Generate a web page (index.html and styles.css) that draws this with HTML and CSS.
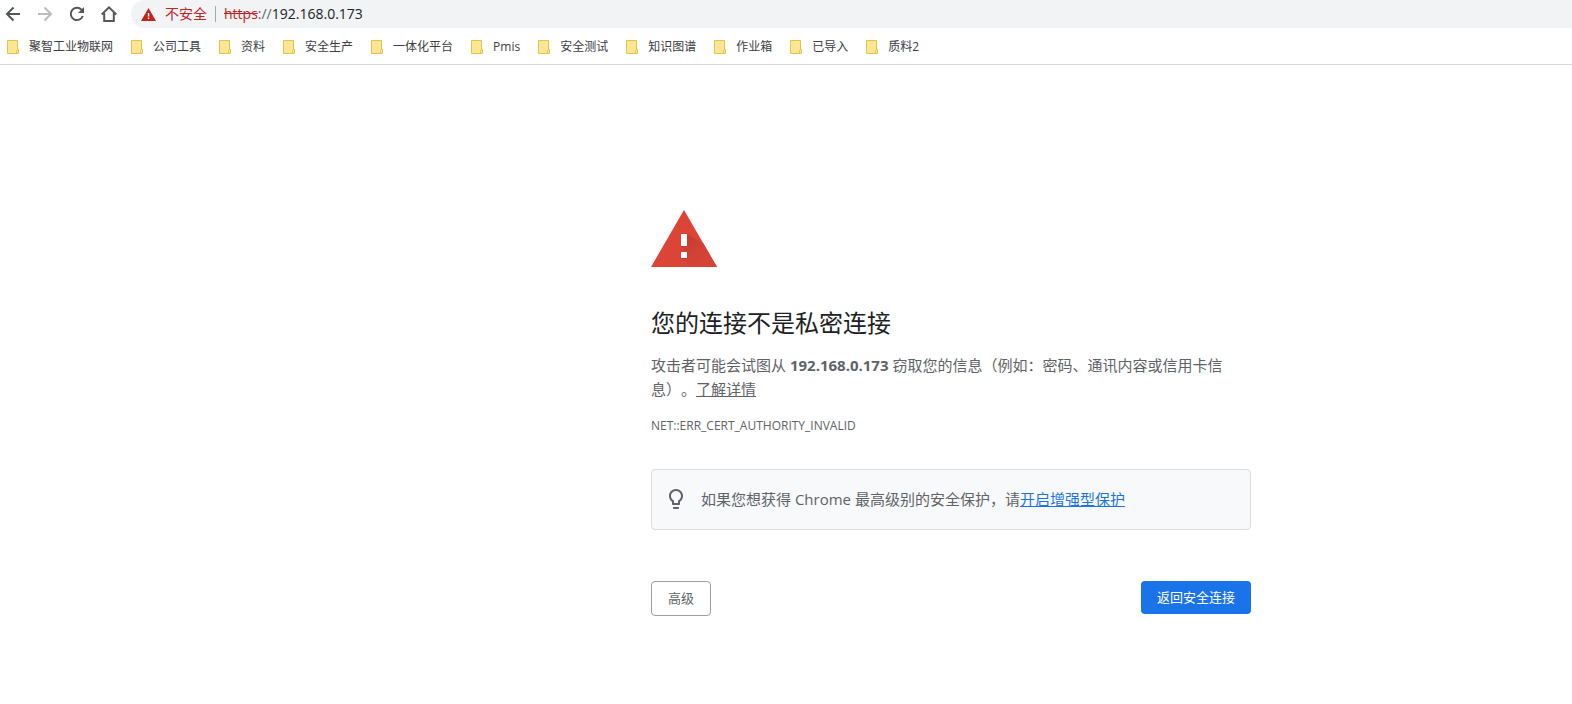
FILE: index.html
```html
<!DOCTYPE html>
<html lang="zh-CN">
<head>
<meta charset="utf-8">
<title>隐私设置错误</title>
<link rel="stylesheet" href="styles.css">
</head>
<body>
<svg class="sprite" aria-hidden="true">
  <symbol id="folder" viewBox="0 0 12 14"><path d="M.5.5h10v9h1v4H.5z"/><path d="M9.500 13.500v-3l1-1h1v3l-1 1z"/></symbol>
</svg>
<header class="browser">
  <div class="toolbar">
    <nav class="nav">
      <button class="nav-button" type="button" aria-label="后退"><svg viewBox="0 0 16 16"><path d="M15 8H2M8.500 1.500L2 8l6.500 6.500"/></svg></button>
      <button class="nav-button nav-button-off" type="button" aria-label="前进"><svg viewBox="0 0 16 16"><path d="M1 8h13M7.500 1.500L14 8l-6.500 6.500"/></svg></button>
      <button class="nav-button" type="button" aria-label="重新加载"><svg viewBox="0 0 16 16"><path d="M13.800 10a6.200 6.200 0 1 1-1.300-6.400L14 5"/><path class="solid" d="M15 1v6H9z"/></svg></button>
      <button class="nav-button" type="button" aria-label="主页"><svg viewBox="0 0 16 16"><path d="M.7 8.500L8 1.400l7.300 7.100M3.200 7v8h9.600V7"/></svg></button>
    </nav>
    <div class="omnibox">
      <svg class="omnibox-warning" viewBox="0 0 15 13"><path fill="#c5221f" d="M7.500 0L15 13H0z"/><path fill="#fff" d="M6.800 5h1.500v3.500H6.800zM6.800 9.500h1.500V11H6.800z"/></svg>
      <span class="omnibox-status">不安全</span>
      <span class="omnibox-url"><s>https</s><span class="omnibox-sep">://</span>192.168.0.173</span>
    </div>
  </div>
  <nav class="bookmarks">
    <a class="bookmark" href="#"><svg class="folder"><use href="#folder"/></svg>聚智工业物联网</a>
    <a class="bookmark" href="#"><svg class="folder"><use href="#folder"/></svg>公司工具</a>
    <a class="bookmark" href="#"><svg class="folder"><use href="#folder"/></svg>资料</a>
    <a class="bookmark" href="#"><svg class="folder"><use href="#folder"/></svg>安全生产</a>
    <a class="bookmark" href="#"><svg class="folder"><use href="#folder"/></svg>一体化平台</a>
    <a class="bookmark" href="#"><svg class="folder"><use href="#folder"/></svg>Pmis</a>
    <a class="bookmark" href="#"><svg class="folder"><use href="#folder"/></svg>安全测试</a>
    <a class="bookmark" href="#"><svg class="folder"><use href="#folder"/></svg>知识图谱</a>
    <a class="bookmark" href="#"><svg class="folder"><use href="#folder"/></svg>作业箱</a>
    <a class="bookmark" href="#"><svg class="folder"><use href="#folder"/></svg>已导入</a>
    <a class="bookmark" href="#"><svg class="folder"><use href="#folder"/></svg>质料2</a>
  </nav>
</header>
<main class="page">
  <div class="interstitial">
    <svg class="warning" viewBox="0 0 66 57">
      <defs><linearGradient id="shade" gradientUnits="userSpaceOnUse" x1="33" y1="30" x2="54" y2="51"><stop offset="0" stop-color="#c33c31"/><stop offset="0.500" stop-color="#d14136"/><stop offset="1" stop-color="#d64337"/></linearGradient></defs>
      <path fill="#db4437" d="M33 0l33 57H0z"/>
      <path fill="url(#shade)" d="M36 24l16.500 9.700L66 57H39l-9-9 6-6-6-6z"/>
      <path fill="#fff" d="M30 24h6v12h-6zM30 42h6v6h-6z"/>
    </svg>
    <h1 class="title">您的连接不是私密连接</h1>
    <p class="text">攻击者可能会试图从 <strong>192.168.0.173</strong> 窃取您的信息（例如：密码、通讯内容或信用卡信息）。<a class="more" href="#">了解详情</a></p>
    <p class="code">NET::ERR_CERT_AUTHORITY_INVALID</p>
    <div class="tip">
      <svg class="bulb" viewBox="0 0 24 24"><path d="M9 21c0 .55.45 1 1 1h4c.55 0 1-.45 1-1v-1H9v1zm3-19C8.140 2 5 5.140 5 9c0 2.380 1.190 4.470 3 5.740V17c0 .55.45 1 1 1h6c.55 0 1-.45 1-1v-2.260c1.810-1.270 3-3.360 3-5.740 0-3.860-3.140-7-7-7zm2.850 11.100l-.85.6V16h-4v-2.300l-.85-.6C7.800 12.160 7 10.630 7 9c0-2.760 2.240-5 5-5s5 2.240 5 5c0 1.630-.8 3.160-2.150 4.100z"/></svg>
      <p class="tip-text">如果您想获得 Chrome 最高级别的安全保护，请<a href="#">开启增强型保护</a></p>
    </div>
    <div class="actions">
      <button class="button button-plain" type="button">高级</button>
      <button class="button button-primary" type="button">返回安全连接</button>
    </div>
  </div>
</main>
</body>
</html>
```
FILE: styles.css
```css
* { box-sizing: border-box; }
body {
  margin: 0;
  background: #fff;
  color: #5f6368;
  font-family: "Open Sans", "Noto Sans CJK SC", sans-serif;
  text-spacing-trim: space-all;
}
h1, p { margin: 0; }
svg { display: block; }
button { font-family: inherit; cursor: pointer; }
.sprite { position: absolute; width: 0; height: 0; }

.browser { border-bottom: 1px solid #d8d9db; }
.toolbar { display: flex; height: 28px; }
.nav { display: flex; align-items: center; gap: 16px; padding: 0 14px 0 5px; }
.nav-button { width: 16px; height: 16px; padding: 0; border: 0; background: none; color: #54575b; }
.nav-button-off { color: #babcbe; }
.nav-button svg { width: 16px; height: 16px; fill: none; stroke: currentColor; stroke-width: 2; }
.nav-button .solid { fill: currentColor; stroke: none; }

.omnibox {
  flex: 1;
  display: flex;
  align-items: center;
  padding-left: 10px;
  border-radius: 14px 0 0 14px;
  background: #f1f3f4;
  font-size: 14px;
  line-height: 20px;
}
.omnibox-warning { width: 15px; height: 13px; margin-right: 9px; }
.omnibox-status { padding-right: 8px; color: #c5221f; }
.omnibox-url { padding-left: 8px; border-left: 1px solid #a5a8ab; line-height: 16px; color: #202124; }
.omnibox-url s { color: #c5221f; }
.omnibox-sep { color: #5f6368; }

.bookmarks { display: flex; align-items: center; gap: 18px; height: 36px; padding: 1px 7px 0; }
.bookmark {
  display: flex;
  align-items: center;
  gap: 10px;
  color: #3c4043;
  font-size: 12px;
  line-height: 18px;
  text-decoration: none;
  white-space: nowrap;
}
.folder { width: 12px; height: 14px; fill: #ffe694; stroke: #e8c34a; }

.page { display: flex; justify-content: center; padding: 145px 0 88px 330px; }
.interstitial { width: 600px; }
.warning { width: 66px; height: 57px; }
.title { margin-top: 38px; color: #202124; font-size: 24px; font-weight: 400; line-height: 36px; }
.text { margin-top: 12px; font-size: 15px; line-height: 24px; }
.more { color: inherit; }
.code { margin-top: 17px; font-size: 12px; line-height: 16px; }
.tip {
  display: flex;
  align-items: center;
  gap: 13px;
  margin-top: 35px;
  padding: 17px 12px 18px;
  border: 1px solid #dadce0;
  border-radius: 4px;
  background: #f8f9fb;
}
.bulb { width: 24px; height: 24px; fill: #5f6368; }
.tip-text { font-size: 15px; line-height: 24px; }
.tip-text a { color: #1a73e8; }
.actions { display: flex; justify-content: space-between; align-items: flex-start; margin-top: 51px; }
.button { padding: 8px 16px; border: 0; border-radius: 4px; font-size: 13px; line-height: 17px; }
.button-plain { border: 1px solid #9aa0a6; background: #fff; color: #5f6368; }
.button-primary { background: #1a73e8; color: #fff; }
```
